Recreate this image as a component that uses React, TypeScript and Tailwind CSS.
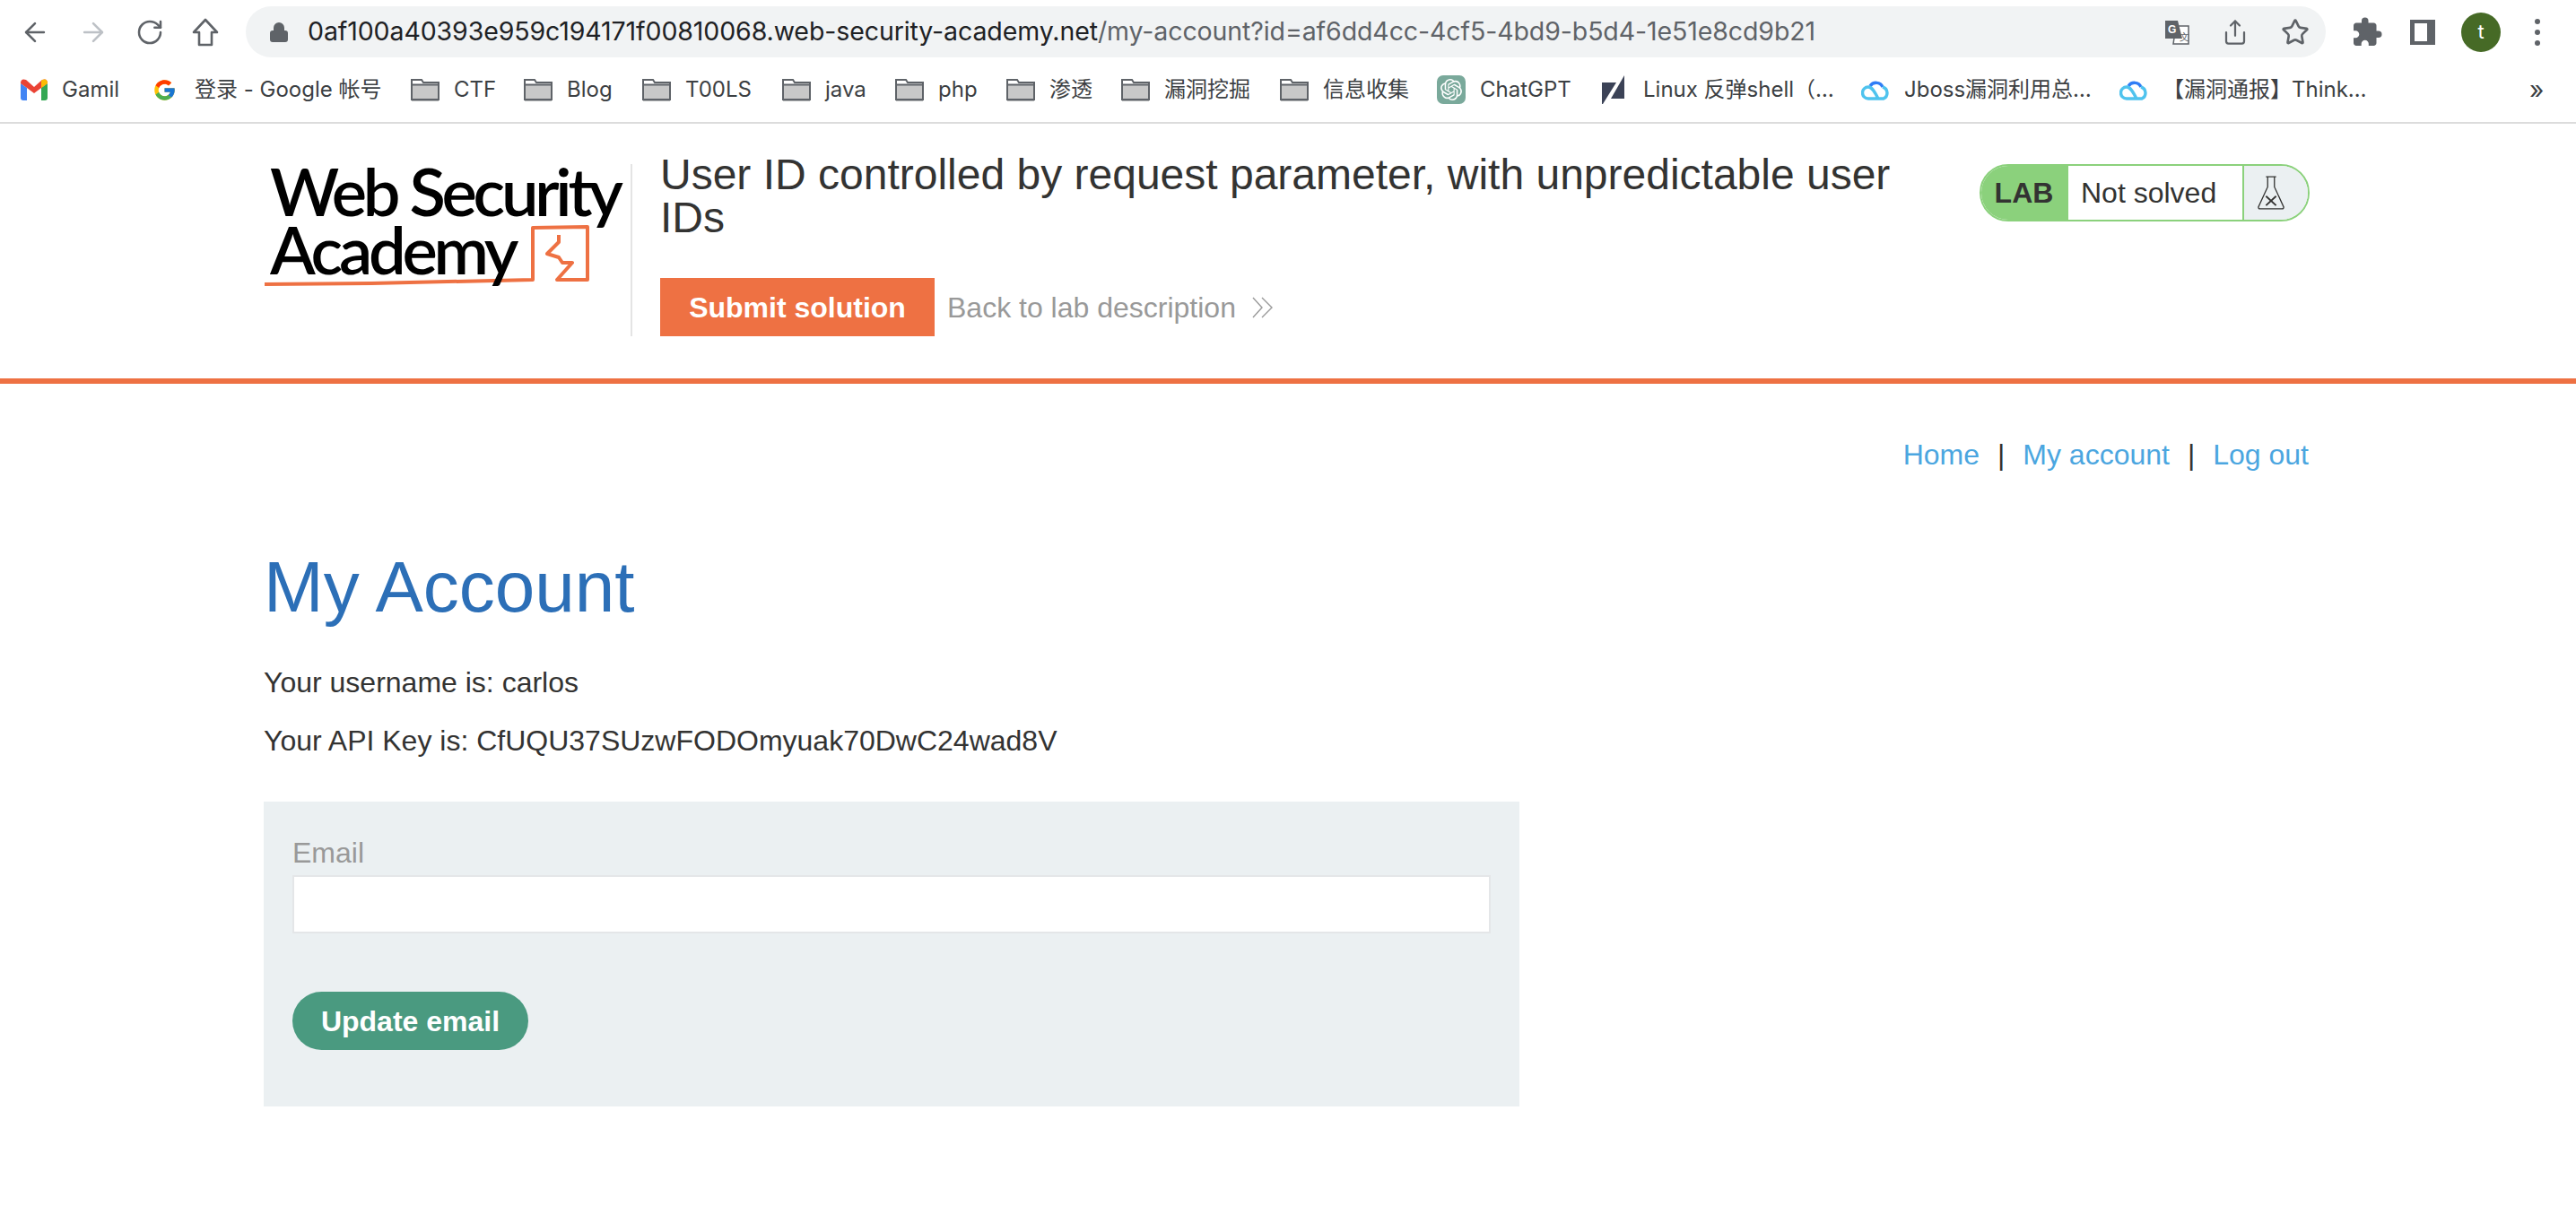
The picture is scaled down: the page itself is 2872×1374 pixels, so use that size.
import { ArrowLeft, ArrowRight, Lock, RotateCw, Share, Star } from 'lucide-react'
import { FcGoogle } from 'react-icons/fc'
import { MdExtension } from 'react-icons/md'
import { SiOpenai } from 'react-icons/si'

const CHROME_FONT = "font-['Inter','Noto_Sans_CJK_SC',sans-serif]"

function HomeIcon() {
  return (
    <svg width="30" height="34" viewBox="0 0 30 34" fill="none" stroke="#5f6368" strokeWidth="2.6">
      <path d="M15 3 L28 17 H22 V31 H8 V17 H2 Z" strokeLinejoin="round" />
    </svg>
  )
}

function FolderIcon() {
  return (
    <svg width="32" height="26" viewBox="0 0 32 26" className="shrink-0">
      <path d="M1 24 V2 H12 L14 5 H31 V24 Z" fill="#fff" stroke="#5f6368" strokeWidth="2" />
      <rect x="2" y="8" width="28" height="15" fill="#c8c8c8" />
      <path d="M1 7.5 H31" stroke="#5f6368" strokeWidth="2" />
      <path d="M1 24.5 H31" stroke="#5f6368" strokeWidth="2" />
    </svg>
  )
}

function GmailIcon() {
  return (
    <svg width="30" height="24" viewBox="0 0 30 24" className="shrink-0">
      <path d="M0 5 V21 Q0 24 3 24 H7 V10 Z" fill="#4285f4" />
      <path d="M30 5 V21 Q30 24 27 24 H23 V10 Z" fill="#34a853" />
      <path d="M0 5 Q0 -1 6 1 L15 9 L24 1 Q30 -1 30 5 L23 10 L15 16 L7 10 Z" fill="#ea4335" />
      <path d="M23 2.5 L24 1 Q30 -1 30 5 L23 10 Z" fill="#fbbc04" />
    </svg>
  )
}

function ChatGptIcon() {
  return (
    <span className="flex h-[32px] w-[32px] shrink-0 items-center justify-center rounded-[7px] bg-[#7aa99b]">
      <SiOpenai size={24} color="#ffffff" />
    </span>
  )
}

function SlashIcon() {
  return (
    <svg width="26" height="32" viewBox="0 0 26 32" className="mr-[4px] shrink-0">
      <path d="M0 8 H16 L1 32 H0 Z" fill="#3b4256" />
      <path d="M10 26 L25 0 V26 Z" fill="#3b4256" />
    </svg>
  )
}

function CloudIcon() {
  return (
    <svg width="32" height="24" viewBox="0 0 32 24" fill="none" strokeWidth="3.4" className="shrink-0">
      <path d="M10 8 A8 8 0 0 1 24 9" stroke="#2f7df6" />
      <path d="M24 9 A7 7 0 0 1 25 22 H8 A6.5 6.5 0 0 1 8 9 C12 9 15 14 19 22" stroke="#4fc3ee" />
    </svg>
  )
}

function TranslateIcon() {
  return (
    <svg width="28" height="28" viewBox="0 0 28 28" className="shrink-0">
      <path d="M13 7 H27 V27 H10 Z" fill="#fff" stroke="#5f6368" strokeWidth="1.5" />
      <path d="M1 1 H15 L20 21 H1 Z" fill="#5f6368" />
      <text x="4" y="15" fontSize="12" fontWeight="700" fill="#fff" fontFamily="Liberation Sans">G</text>
      <text x="17" y="23" fontSize="11" fill="#5f6368" fontFamily="Liberation Sans">文</text>
    </svg>
  )
}

function SidebarIcon() {
  return (
    <svg width="28" height="28" viewBox="0 0 28 28">
      <path fillRule="evenodd" d="M0 0 H28 V28 H0 Z M5 4 V24 H19 V4 Z" fill="#5f6368" />
    </svg>
  )
}

function FlaskIcon() {
  return (
    <svg width="32" height="40" viewBox="0 0 34 42" fill="none" stroke="#333332" strokeWidth="1.4">
      <path d="M11 2 H23 M13 2 V14 L2 38 Q2 40 4 40 H30 Q32 40 32 38 L21 14 V2" />
      <path d="M11 25 L23 36 M23 25 L11 36" strokeWidth="2" />
    </svg>
  )
}

function DoubleChevron() {
  return (
    <svg width="24" height="24" viewBox="0 0 24 24" fill="none" stroke="#999999" strokeWidth="1.4">
      <path d="M1 1 L11 12 L1 23 M11 1 L22 12 L11 23" />
    </svg>
  )
}

// orange scribble of the logo, coordinates relative to the logo box
function LogoMark() {
  return (
    <svg width="372" height="150" viewBox="0 0 372 150" fill="none" className="absolute left-0 top-[-2px]">
      <path
        d="M1 136 L120 135 L300 131 V73 L361 72 V131 H327 L344 112 H333 L329 106 L316 102 L329 89 V81"
        stroke="#ee7143"
        strokeWidth="4"
        strokeLinejoin="round"
      />
    </svg>
  )
}

function Logo() {
  return (
    <div className="relative h-[192px] w-[409px] shrink-0 whitespace-nowrap font-['Lato',sans-serif] text-[74px] font-semibold leading-[65px] tracking-[-4.2px] text-black">
      <LogoMark />
      <div className="relative mt-[-3px] pl-[7px]">
        <div>Web Security</div>
        <div>Academy</div>
      </div>
    </div>
  )
}

type Bookmark = { icon: React.ReactNode; label: string; width: number }

const BOOKMARKS: Bookmark[] = [
  { icon: <GmailIcon />, label: 'Gamil', width: 147 },
  { icon: <FcGoogle size={27} className="mr-[4px] shrink-0" />, label: '登录 - Google 帐号', width: 288 },
  { icon: <FolderIcon />, label: 'CTF', width: 126 },
  { icon: <FolderIcon />, label: 'Blog', width: 132 },
  { icon: <FolderIcon />, label: 'T00LS', width: 156 },
  { icon: <FolderIcon />, label: 'java', width: 126 },
  { icon: <FolderIcon />, label: 'php', width: 124 },
  { icon: <FolderIcon />, label: '渗透', width: 128 },
  { icon: <FolderIcon />, label: '漏洞挖掘', width: 177 },
  { icon: <FolderIcon />, label: '信息收集', width: 175 },
  { icon: <ChatGptIcon />, label: 'ChatGPT', width: 184 },
  { icon: <SlashIcon />, label: 'Linux 反弹shell（…', width: 289 },
  { icon: <CloudIcon />, label: 'Jboss漏洞利用总…', width: 288 },
  { icon: <CloudIcon />, label: '【漏洞通报】Think…', width: 457 },
]

function BrowserChrome() {
  return (
    <div className={`${CHROME_FONT} h-[138px] border-b-2 border-[#dcdcdc] bg-white`}>
      <div className="flex h-[73px] items-center pb-[2px]">
        <div className="flex w-[274px] items-center justify-between pl-[22px] pr-[30px]">
          <ArrowLeft size={34} color="#5f6368" strokeWidth={1.8} />
          <ArrowRight size={34} color="#bdc1c6" strokeWidth={1.8} />
          <RotateCw size={32} color="#5f6368" strokeWidth={1.9} />
          <HomeIcon />
        </div>
        <div className="flex h-[57px] w-[2319px] items-center rounded-full bg-[#f1f3f4] pl-[25px] pr-[18px]">
          <Lock size={24} fill="#5f6368" color="#5f6368" className="shrink-0" />
          <div className="ml-[20px] flex-1 whitespace-nowrap text-[28.5px] tracking-[-0.1px] text-[#202124]">
            0af100a40393e959c194171f00810068.web-security-academy.net
            <span className="text-[#5f6368]">/my-account?id=af6dd4cc-4cf5-4bd9-b5d4-1e51e8cd9b21</span>
          </div>
          <div className="flex items-center gap-[36px]">
            <TranslateIcon />
            <Share size={30} color="#5f6368" strokeWidth={1.8} />
            <Star size={32} color="#5f6368" strokeWidth={2} />
          </div>
        </div>
        <div className="flex flex-1 items-center pl-[28px]">
          <MdExtension size={36} color="#5f6368" />
          <span className="ml-[30px]"><SidebarIcon /></span>
          <span className="ml-[29px] flex h-[44px] w-[44px] items-center justify-center rounded-full bg-[#466a26] text-[22px] text-white">t</span>
          <span className="ml-[38px] flex flex-col gap-[6px]">
            <i className="block h-[6px] w-[6px] rounded-full bg-[#5f6368]" />
            <i className="block h-[6px] w-[6px] rounded-full bg-[#5f6368]" />
            <i className="block h-[6px] w-[6px] rounded-full bg-[#5f6368]" />
          </span>
        </div>
      </div>
      <div className="flex h-[54px] items-center pl-[23px] text-[24px] text-[#3c4043]">
        {BOOKMARKS.map((b) => (
          <div key={b.label} className="flex shrink-0 items-center gap-[16px] whitespace-nowrap" style={{ width: b.width }}>
            {b.icon}
            <span>{b.label}</span>
          </div>
        ))}
        <span className="text-[28px] leading-none">»</span>
      </div>
    </div>
  )
}

function LabHeader() {
  return (
    <div className="flex h-[284px] pl-[294px] pt-[45px]">
      <Logo />
      <div className="h-[192px] w-[2px] shrink-0 bg-[#e4e4e4]" />
      <div className="ml-[31px] w-[1400px]">
        <h2 className="mt-[-12px] w-[1390px] text-[48px] font-normal leading-[48px] text-[#333332]">
          User ID controlled by request parameter, with unpredictable user IDs
        </h2>
        <div className="mt-[43px] flex items-center">
          <button type="button" className="h-[65px] w-[306px] bg-[#ee7143] text-[32px] font-bold text-white">
            Submit solution
          </button>
          <a className="ml-[14px] text-[32px] text-[#999999]">Back to lab description</a>
          <span className="ml-[18px]"><DoubleChevron /></span>
        </div>
      </div>
      <div className="ml-[71px] flex h-[64px] w-[368px] overflow-hidden rounded-full border-2 border-[#8bd17c] text-[32px] text-[#333332]">
        <div className="flex w-[97px] items-center justify-center bg-[#8bd17c] pr-[2px] font-bold">LAB</div>
        <div className="flex w-[196px] items-center border-r-2 border-[#8bd17c] bg-white pl-[14px]">Not solved</div>
        <div className="flex flex-1 items-center justify-center bg-[#ebf0f2] pr-[12px]"><FlaskIcon /></div>
      </div>
    </div>
  )
}

function Account() {
  return (
    <div className="w-[2280px] text-[32px] text-[#333332]">
      <nav className="flex justify-end leading-[36px]">
        <a className="text-[#4ba6e0]">Home</a>
        <span className="mx-[20px]">|</span>
        <a className="text-[#4ba6e0]">My account</a>
        <span className="mx-[20px]">|</span>
        <a className="text-[#4ba6e0]">Log out</a>
      </nav>
      <h1 className="mt-[82px] text-[80px] font-normal leading-[96px] text-[#2c6fb7]">My Account</h1>
      <p className="mt-[40px] leading-[36px]">Your username is: carlos</p>
      <p className="mt-[29px] leading-[36px]">Your API Key is: CfUQU37SUzwFODOmyuak70DwC24wad8V</p>
      <form className="mt-[50px] h-[340px] w-[1400px] bg-[#ebf0f2] px-[32px] pt-[39px]">
        <label className="block leading-[36px] text-[#999999]">Email</label>
        <input className="mt-[7px] block h-[65px] w-full border-2 border-[#e4e6e8] bg-white" />
        <button type="button" className="mt-[65px] h-[65px] w-[263px] rounded-full bg-[#4a9a80] font-bold text-white">
          Update email
        </button>
      </form>
    </div>
  )
}

export default function App() {
  return (
    <div className="h-[1374px] w-[2872px] overflow-hidden bg-white font-['Liberation_Sans',Arial,sans-serif]">
      <BrowserChrome />
      <LabHeader />
      <div className="h-[6px] bg-[#ee7143]" />
      <div className="pl-[294px] pt-[61px]">
        <Account />
      </div>
    </div>
  )
}
